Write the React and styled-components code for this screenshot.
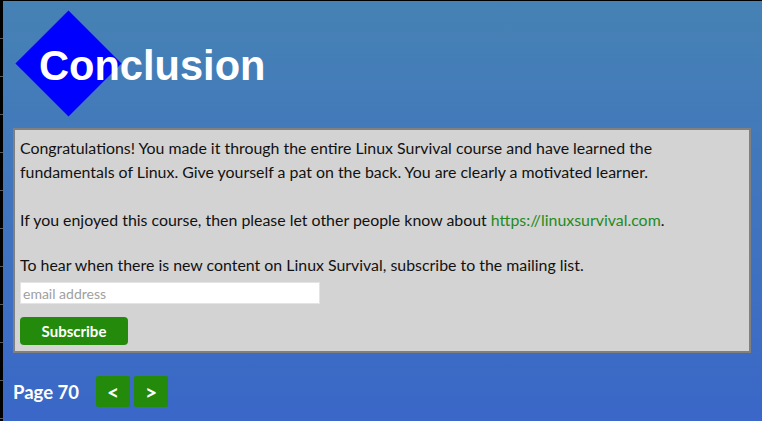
import React from "react";
import styled, { createGlobalStyle } from "styled-components";

const GlobalStyle = createGlobalStyle`
  html, body {
    margin: 0;
    padding: 0;
    height: 100%;
  }
  body {
    background: #000;
    font-family: Lato, "Open Sans", sans-serif;
  }
  #root {
    height: 100%;
  }
`;

const Page = styled.div`
  display: flex;
  height: 100%;
  box-sizing: border-box;
  border-top: 1px solid #000;
  overflow: hidden;
`;

// the little ruler strip on the left edge
const Ruler = styled.div`
  flex: none;
  width: 3px;
  background: repeating-linear-gradient(
    to bottom,
    #000 0px,
    #000 37px,
    #5a5a5a 37px,
    #5a5a5a 38px
  );
`;

const Main = styled.main`
  flex: 1;
  padding: 0 11px 0 10px;
  background: linear-gradient(to bottom, #4682b4 0%, #3a67c8 100%);
`;

const Header = styled.header`
  position: relative;
  padding-top: 41px;
  margin-bottom: 38px;

  &::before {
    content: "";
    position: absolute;
    left: 18px;
    top: 25px;
    width: 75px;
    height: 75px;
    background: #0000ff;
    transform: rotate(45deg);
  }
`;

const Title = styled.h1`
  position: relative;
  margin: 0;
  padding-left: 26px;
  font-family: "Liberation Sans", Arial, sans-serif;
  font-weight: bold;
  font-size: 41.6px;
  line-height: 48px;
  color: #fff;
`;

const Card = styled.section`
  background: #d3d3d3;
  border: 2px solid #808080;
  padding: 6px 5px 6px 5px;
  color: #111;
  font-size: 15.9px;
  line-height: 24px;
`;

const Para = styled.p`
  margin: 0 0 ${p => p.gap || 0}px;
`;

const Link = styled.a`
  color: #228b22;
  text-decoration: none;
`;

const Email = styled.input`
  display: block;
  box-sizing: border-box;
  width: 300px;
  height: 22px;
  margin: 5px 0 13px;
  padding: 0 2px;
  border: 1px solid #e4e4e4;
  background: #fff;
  font-family: Lato, sans-serif;
  font-size: 14px;
  outline: none;

  &::placeholder {
    color: #a0a0a0;
  }
`;

const GreenButton = styled.button`
  display: flex;
  align-items: center;
  justify-content: center;
  padding: 0;
  border: none;
  border-radius: ${p => p.radius || 3}px;
  background: #238a0c;
  color: #fff;
  font-family: Lato, sans-serif;
  font-weight: bold;
  cursor: pointer;
`;

const Subscribe = styled(GreenButton)`
  width: 108px;
  height: 28px;
  font-size: 15px;
`;

const Footer = styled.footer`
  display: flex;
  align-items: center;
  margin-top: 23px;
  color: #fff;
`;

const PageLabel = styled.span`
  font-weight: bold;
  font-size: 18.5px;
  margin-right: 17px;
`;

const NavButton = styled(GreenButton)`
  width: 34px;
  height: 31px;
  margin-right: 4px;
  font-size: 21px;
`;

export default function App() {
  return (
    <>
      <GlobalStyle />
      <Page>
        <Ruler />
        <Main>
          <Header>
            <Title>Conclusion</Title>
          </Header>
          <Card>
            <Para gap={24}>
              Congratulations! You made it through the entire Linux Survival course and have
              learned the fundamentals of Linux. Give yourself a pat on the back. You are clearly a
              motivated learner.
            </Para>
            <Para gap={21}>
              If you enjoyed this course, then please let other people know about{" "}
              <Link href="#">https://linuxsurvival.com</Link>.
            </Para>
            <Para>To hear when there is new content on Linux Survival, subscribe to the mailing list.</Para>
            <Email type="email" placeholder="email address" />
            <Subscribe radius={4}>Subscribe</Subscribe>
          </Card>
          <Footer>
            <PageLabel>Page 70</PageLabel>
            <NavButton radius={2}>&lt;</NavButton>
            <NavButton radius={2}>&gt;</NavButton>
          </Footer>
        </Main>
      </Page>
    </>
  );
}
